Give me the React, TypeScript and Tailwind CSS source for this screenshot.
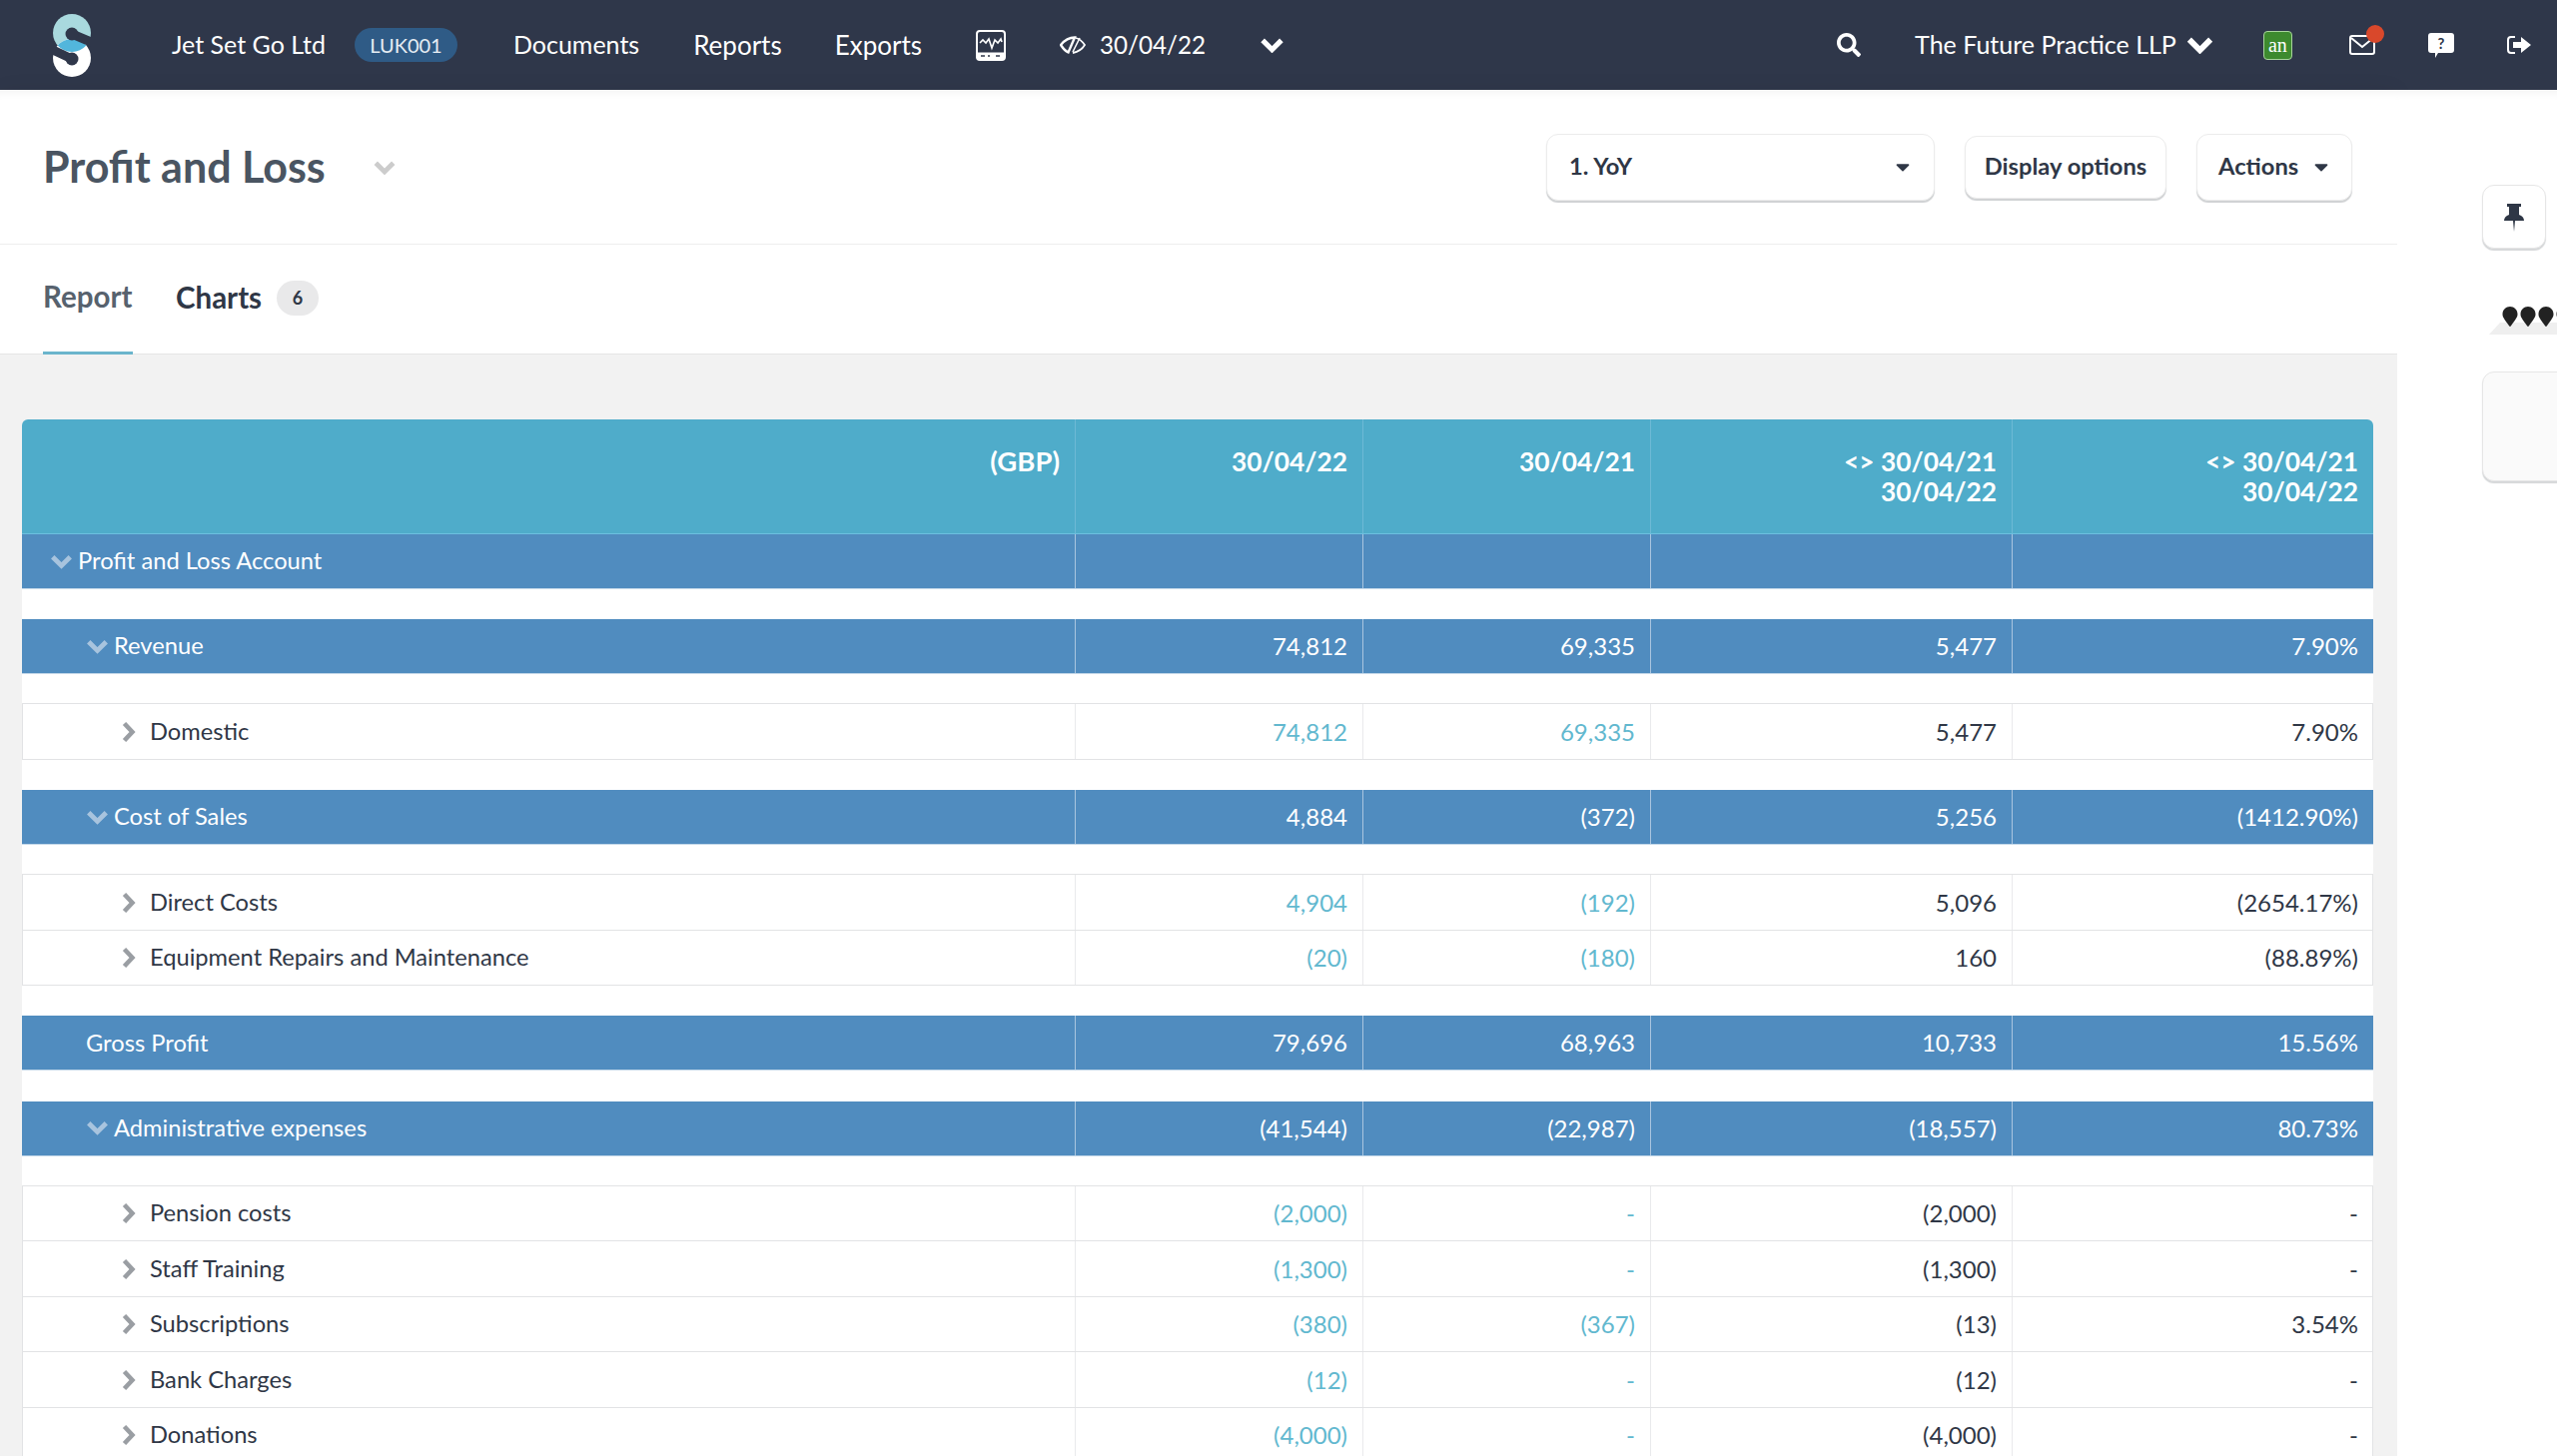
import React from 'react';
import { FaSearch, FaMapMarker, FaCaretDown } from 'react-icons/fa';

type Row =
  | { kind: 'gap'; lined?: boolean }
  | {
      kind: 'head' | 'item' | 'plain';
      label: string;
      depth?: number;
      values?: string[];
    };

const rows: Row[] = [
  { kind: 'head', label: 'Profit and Loss Account', depth: 0, values: ['', '', '', ''] },
  { kind: 'gap' },
  { kind: 'head', label: 'Revenue', depth: 1, values: ['74,812', '69,335', '5,477', '7.90%'] },
  { kind: 'gap', lined: true },
  { kind: 'item', label: 'Domestic', values: ['74,812', '69,335', '5,477', '7.90%'] },
  { kind: 'gap' },
  { kind: 'head', label: 'Cost of Sales', depth: 1, values: ['4,884', '(372)', '5,256', '(1412.90%)'] },
  { kind: 'gap', lined: true },
  { kind: 'item', label: 'Direct Costs', values: ['4,904', '(192)', '5,096', '(2654.17%)'] },
  { kind: 'item', label: 'Equipment Repairs and Maintenance', values: ['(20)', '(180)', '160', '(88.89%)'] },
  { kind: 'gap' },
  { kind: 'plain', label: 'Gross Profit', values: ['79,696', '68,963', '10,733', '15.56%'] },
  { kind: 'gap' },
  { kind: 'head', label: 'Administrative expenses', depth: 1, values: ['(41,544)', '(22,987)', '(18,557)', '80.73%'] },
  { kind: 'gap', lined: true },
  { kind: 'item', label: 'Pension costs', values: ['(2,000)', '-', '(2,000)', '-'] },
  { kind: 'item', label: 'Staff Training', values: ['(1,300)', '-', '(1,300)', '-'] },
  { kind: 'item', label: 'Subscriptions', values: ['(380)', '(367)', '(13)', '3.54%'] },
  { kind: 'item', label: 'Bank Charges', values: ['(12)', '-', '(12)', '-'] },
  { kind: 'item', label: 'Donations', values: ['(4,000)', '-', '(4,000)', '-'] },
];

const colWidths = ['w-[288px]', 'w-[288px]', 'w-[362px]', 'w-[362px]'];

// thick glyph style chevrons, the icon packs only have thin or rounded ones
function ChevronDown({ className }: { className: string }) {
  return (
    <svg viewBox="0 0 24 16" className={className} fill="none" stroke="currentColor" strokeWidth="5.500">
      <path d="M2 2.500 L12 12.500 L22 2.500" />
    </svg>
  );
}

function ChevronRight({ className }: { className: string }) {
  return (
    <svg viewBox="0 0 14 20" className={className} fill="none" stroke="currentColor" strokeWidth="4.500">
      <path d="M2.500 1.500 L10.500 10 L2.500 18.500" />
    </svg>
  );
}

function Logo() {
  return (
    <svg viewBox="0 0 38 63" className="w-[38px] h-[63px]">
      <circle cx="19" cy="19" r="19" fill="#a9d9de" />
      <circle cx="19" cy="44" r="19" fill="#ffffff" />
      <path d="M4.700 31.500 A19 19 0 0 1 33.300 31.500 A19 19 0 0 1 4.700 31.500 Z" fill="#52b6dc" />
      <path d="M19 20 L38 28" stroke="#2f374a" strokeWidth="9" strokeLinecap="round" />
      <circle cx="19" cy="20" r="6.500" fill="#2f374a" />
      <path d="M19 45 L0 36" stroke="#2f374a" strokeWidth="9" strokeLinecap="round" />
      <circle cx="19" cy="45" r="6.500" fill="#2f374a" />
    </svg>
  );
}

function NavBar() {
  return (
    <div className="h-[90px] bg-[#2f374a] flex items-center text-white text-[25px] shrink-0">
      <div className="ml-[53px]">
        <Logo />
      </div>
      <span className="ml-[81px]">Jet Set Go Ltd</span>
      <span className="ml-[29px] w-[103px] h-[34px] rounded-[17px] bg-[#2f5b86] flex items-center justify-center text-[20px] text-[#e6edf3]">
        LUK001
      </span>
      <span className="ml-[56px]">Documents</span>
      <span className="ml-[54px] text-[26px]">Reports</span>
      <span className="ml-[53px] text-[26px]">Exports</span>
      <svg viewBox="0 0 30 31" className="ml-[54px] w-[30px] h-[31px]" fill="none" stroke="#fff">
        <rect x="1" y="1" width="28" height="29" rx="3" strokeWidth="2" />
        <path d="M1 23 H29 V27 a3 3 0 0 1 -3 3 H4 a3 3 0 0 1 -3 -3 Z" fill="#fff" strokeWidth="1" />
        <path d="M4 13 l3 -3 l3 3 l3 -4 l3 9 l3 -8 l3 3 l3 -4 l1 3" strokeWidth="1.600" />
        <path d="M5 26 h4 M12 26 h2 M20 26 h4" stroke="#2f374a" strokeWidth="1.500" />
      </svg>
      <svg viewBox="0 0 26 20" className="ml-[54px] w-[26px] h-[20px]" fill="none" stroke="#fff" strokeWidth="1.800">
        <path d="M16 3 C 20 4 23 7 25 10 C 22 15 18 17 13 18" />
        <path d="M1 10 C 5 5 9 2.500 15 2.500 L 8.500 17.500 C 5 16 3 13 1 10 Z" strokeWidth="2.400" />
        <path d="M13 17 L20 3" strokeWidth="1.500" />
      </svg>
      <span className="ml-[14px] text-[24.200px]">30/04/22</span>
      <ChevronDown className="ml-[55px] w-[23px] h-[15px]" />
      <FaSearch className="ml-[554px] w-[24px] h-[24px]" />
      <span className="ml-[54px]">The Future Practice LLP</span>
      <ChevronDown className="ml-[10px] w-[27px] h-[17px]" />
      <span className="ml-[50px] w-[29px] h-[29px] rounded-[4px] bg-[#3d8a2e] border border-[#a8d49c] flex items-center justify-center text-[20px] leading-none font-['Liberation_Serif',serif]">
        an
      </span>
      <span className="ml-[57px] relative">
        <svg viewBox="0 0 26 20" className="w-[26px] h-[20px]" fill="none" stroke="#fff" strokeWidth="2">
          <rect x="1" y="1" width="24" height="18" rx="2" />
          <path d="M2 3 L13 12 L24 3" />
        </svg>
        <span className="absolute -top-[10px] left-[17px] w-[18px] h-[18px] rounded-full bg-[#d9482b]" />
      </span>
      <svg viewBox="0 0 26 25" className="ml-[53px] w-[26px] h-[25px]">
        <path d="M3 0 H23 a3 3 0 0 1 3 3 V17 a3 3 0 0 1 -3 3 H10 L7 25 V20 H3 a3 3 0 0 1 -3 -3 V3 a3 3 0 0 1 3 -3 Z" fill="#fff" />
        <text x="13" y="16" textAnchor="middle" fontSize="15" fontWeight="700" fill="#2f374a" fontFamily="Lato">?</text>
      </svg>
      <svg viewBox="0 0 24 18" className="ml-[53px] w-[24px] h-[18px]" fill="none">
        <path d="M8 1 H4 a3 3 0 0 0 -3 3 V14 a3 3 0 0 0 3 3 H8" stroke="#fff" strokeWidth="2" />
        <path d="M6 6 H14 V1 L24 9 L14 17 V12 H6 Z" fill="#fff" />
      </svg>
    </div>
  );
}

function ReportRow({ row }: { row: Row }) {
  if (row.kind === 'gap') {
    return <div className={`h-[30.2px] bg-white ${row.lined ? 'border-b border-[#e2e3e5]' : ''}`} />;
  }
  const values = row.values ?? [];
  if (row.kind === 'item') {
    return (
      <div className="flex h-[55.5px] items-stretch bg-white text-[#2f3746] border-b border-x border-[#e2e3e5]">
        <div className="w-[1053px] shrink-0 flex items-center pl-[99px] text-[23.7px]">
          <ChevronRight className="w-[14px] h-[20px] text-[#9a9ea3] mr-[14px]" />
          {row.label}
        </div>
        {values.map((v, i) => (
          <div
            key={i}
            className={`${colWidths[i]} shrink-0 flex items-center justify-end pr-[15px] border-l border-[#e9eaec] ${i < 2 ? 'text-[#62b8cf]' : ''}`}
          >
            {v}
          </div>
        ))}
      </div>
    );
  }
  const indent = row.kind === 'plain' ? 'pl-[64px]' : row.depth === 0 ? 'pl-[29px]' : 'pl-[65px]';
  return (
    <div className="flex h-[55px] items-stretch bg-[#508cbf] text-white border-b border-[#c4d8e9]">
      <div className={`w-[1054px] shrink-0 flex items-center text-[23.7px] ${indent}`}>
        {row.kind === 'head' && <ChevronDown className="w-[21px] h-[15px] text-[#a8c4de] mr-[6px]" />}
        {row.label}
      </div>
      {values.map((v, i) => (
        <div
          key={i}
          className={`${colWidths[i]} shrink-0 flex items-center justify-end pr-[15px] border-l border-[#a9c5df]`}
        >
          {v}
        </div>
      ))}
    </div>
  );
}

function ReportTable() {
  return (
    <div className="ml-[22px] mt-[65px] w-[2354px] text-[24px]">
      <div className="flex h-[115px] bg-[#4facca] text-white font-bold text-[26.300px] leading-[30px] rounded-t-[6px] border-b border-[#6cc0e0]">
        <div className="w-[1054px] shrink-0 flex justify-end pt-[27px] pr-[15px] text-[27.500px]">(GBP)</div>
        <div className={`${colWidths[0]} shrink-0 text-right pt-[27px] pr-[15px] border-l border-[#6db9d5]`}>30/04/22</div>
        <div className={`${colWidths[1]} shrink-0 text-right pt-[27px] pr-[15px] border-l border-[#6db9d5]`}>30/04/21</div>
        <div className={`${colWidths[2]} shrink-0 text-right pt-[27px] pr-[15px] border-l border-[#6db9d5]`}>
          {'<> 30/04/21'}
          <br />
          30/04/22
        </div>
        <div className={`${colWidths[3]} shrink-0 text-right pt-[27px] pr-[15px] border-l border-[#6db9d5]`}>
          {'<> 30/04/21'}
          <br />
          30/04/22
        </div>
      </div>
      {rows.map((row, i) => (
        <ReportRow key={i} row={row} />
      ))}
    </div>
  );
}

function ToolButton({ className, children }: { className: string; children: React.ReactNode }) {
  return (
    <div
      className={`flex items-center bg-white rounded-[12px] border border-[#ececec] shadow-[0_2px_1px_#cfd1d3] text-[23.7px] font-bold text-[#2f3746] ${className}`}
    >
      {children}
    </div>
  );
}

function MainPanel() {
  return (
    <div className="w-[2400px] shrink-0 flex flex-col bg-[#f2f2f2] shadow-[0_0_20px_rgba(0,0,0,0.06)]">
      <div className="h-[155px] bg-white flex items-center border-b border-[#eeeeee] shrink-0 shadow-[inset_0_12px_12px_-12px_rgba(0,0,0,0.08)]">
        <h1 className="ml-[43px] text-[43px] font-bold text-[#4a5562]">Profit and Loss</h1>
        <ChevronDown className="ml-[48px] w-[22px] h-[14px] text-[#cccccc] mt-[2px]" />
        <ToolButton className="ml-auto w-[389px] h-[67px] pl-[22px] pr-[24px] justify-between">
          1. YoY
          <FaCaretDown className="w-[14px] h-[22px] shrink-0" />
        </ToolButton>
        <ToolButton className="ml-[30px] w-[202px] h-[63px] justify-center">Display options</ToolButton>
        <ToolButton className="ml-[30px] mr-[45px] w-[156px] h-[67px] pl-[21px] gap-[16px]">
          Actions
          <FaCaretDown className="w-[14px] h-[22px] shrink-0" />
        </ToolButton>
      </div>
      <div className="h-[110px] bg-white flex border-b border-[#e6e6e6] shrink-0 px-[43px]">
        <div className="w-[90px] h-[110px] border-b-[3px] border-[#6bb5cc] flex items-center text-[29.500px] font-bold text-[#57626e] pb-[2px]">
          Report
        </div>
        <div className="ml-[43px] flex items-center text-[29.500px] font-bold text-[#2f3746] pb-[2px]">
          Charts
          <span className="ml-[15px] w-[42px] h-[35px] rounded-full bg-[#e9e9ea] flex items-center justify-center text-[18px] font-bold">
            6
          </span>
        </div>
      </div>
      <ReportTable />
    </div>
  );
}

function SidePanel() {
  return (
    <div className="flex-1 bg-white pl-[85px] pt-[95px] overflow-hidden shadow-[inset_0_12px_12px_-12px_rgba(0,0,0,0.08)]">
      <div className="w-[64px] h-[64px] rounded-[12px] bg-white border border-[#e6e6e6] shadow-[0_2px_1px_#d5d7d9] flex items-center justify-center pt-[2px]">
        <svg viewBox="0 0 20 28" className="w-[20px] h-[28px]" fill="#2f3746">
          <path d="M3 0 H17 V3 H15 V11 C 18 12 20 14 20 17 H11 L10 28 L9 17 H0 C 0 14 2 12 5 11 V3 H3 Z" />
        </svg>
      </div>
      <div className="relative mt-[58px] ml-[19px] flex w-[80px] text-[#222222]">
        <svg viewBox="0 0 68 12" className="absolute top-[16px] -left-[12px] w-[68px] h-[12px]" fill="#efefef">
          <path d="M0 12 L11 0 H68 V12 Z" />
        </svg>
        {[0, 1, 2, 3].map((i) => (
          <FaMapMarker key={i} className="relative w-[18px] h-[20px] shrink-0" />
        ))}
      </div>
      <div className="mt-[45px] w-[120px] h-[110px] rounded-[12px] bg-[#fafafa] border border-[#e6e6e6] shadow-[0_2px_1px_#d5d7d9]" />
    </div>
  );
}

export default function App() {
  return (
    <div className="w-[2560px] h-[1458px] overflow-hidden flex flex-col font-['Lato','Liberation_Sans',sans-serif]">
      <NavBar />
      <div className="flex flex-1 min-h-0">
        <MainPanel />
        <SidePanel />
      </div>
    </div>
  );
}
